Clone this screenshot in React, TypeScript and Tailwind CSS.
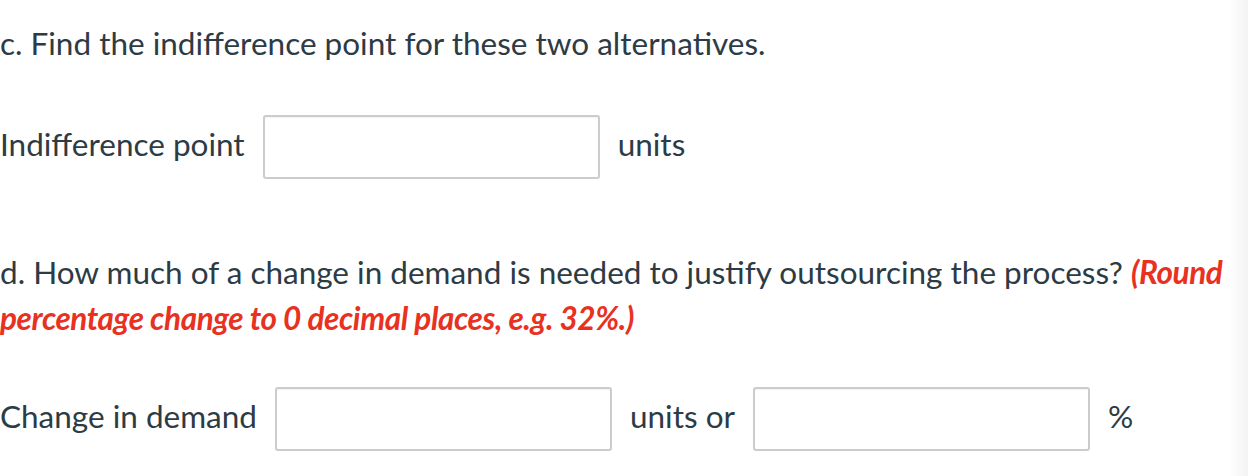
const text = "text-[#2d3b45]";

function AnswerBox({ label }: { label: string }) {
  return (
    <input
      type="text"
      aria-label={label}
      className="h-[64px] w-[337px] shrink-0 rounded-[3px] border-2 border-[#cccccc] bg-white shadow-[inset_0_1px_1px_rgba(0,0,0,0.05)] outline-none"
    />
  );
}

export default function App() {
  return (
    <div className="flex h-[476px] w-full bg-white font-['Lato','Open_Sans',sans-serif] text-[31.5px] leading-[46px]">
      <div className={`min-w-0 flex-1 pt-[20px] ${text}`}>
        <p>c. Find the indifference point for these two alternatives.</p>

        <div className="mt-[49px] flex items-center gap-[18px]">
          <span className="pb-[6px]">Indifference point</span>
          <AnswerBox label="Indifference point" />
          <span className="pb-[6px]">units</span>
        </div>

        <p className="mt-[70px]">
          d. How much of a change in demand is needed to justify outsourcing the process?{" "}
          <strong className="font-bold italic tracking-[-0.4px] text-[#e8311f]">
            (Round percentage change to 0 decimal places, e.g. 32%.)
          </strong>
        </p>

        <div className="mt-[46px] flex items-center gap-[18px]">
          <span className="pb-[6px]">Change in demand</span>
          <AnswerBox label="Change in demand units" />
          <span className="pb-[6px]">units or</span>
          <AnswerBox label="Change in demand percent" />
          <span className="pb-[6px]">%</span>
        </div>
      </div>
      {/* faint page edge on the right */}
      <div className="w-[20px] shrink-0 bg-gradient-to-r from-white to-[#f3f3f3]" />
    </div>
  );
}
